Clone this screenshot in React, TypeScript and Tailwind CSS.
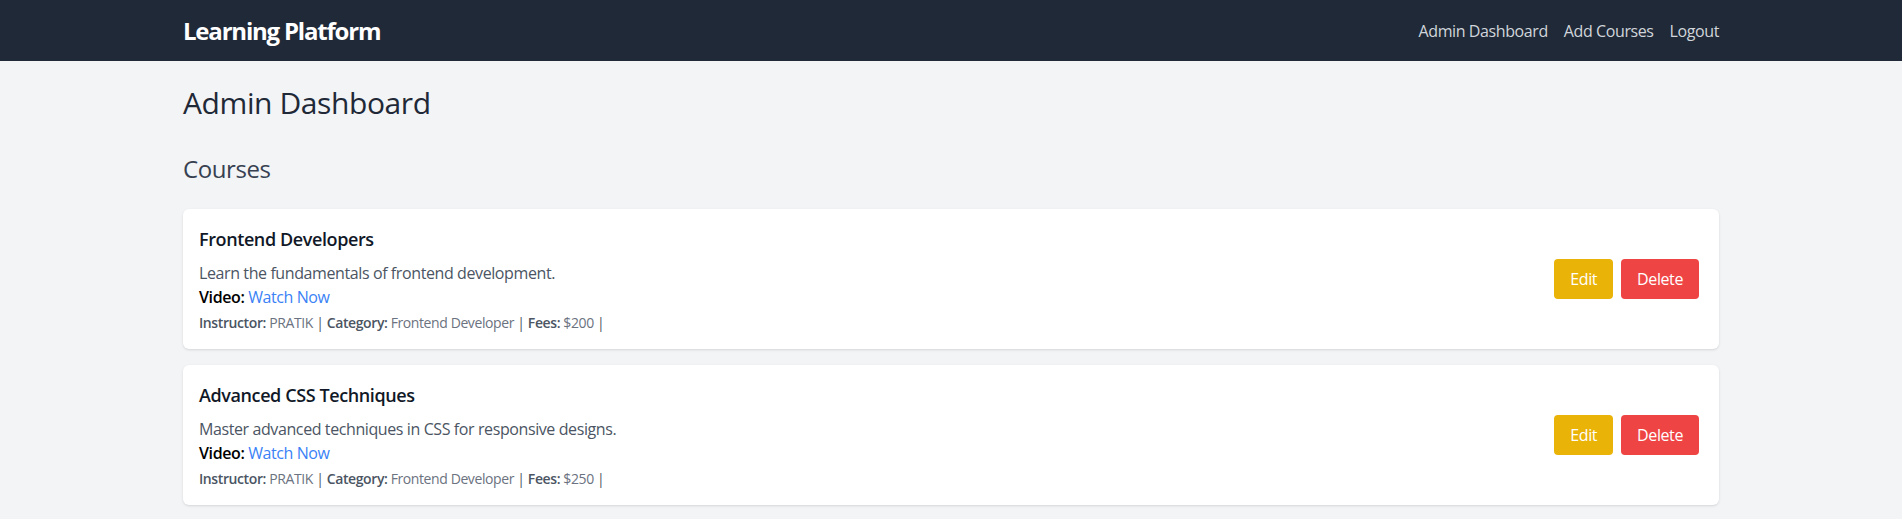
import React from "react";

type Course = {
  id: number;
  title: string;
  description: string;
  instructor: string;
  category: string;
  fees: number;
};

const courses: Course[] = [
  {
    id: 1,
    title: "Frontend Developers",
    description: "Learn the fundamentals of frontend development.",
    instructor: "PRATIK",
    category: "Frontend Developer",
    fees: 200,
  },
  {
    id: 2,
    title: "Advanced CSS Techniques",
    description: "Master advanced techniques in CSS for responsive designs.",
    instructor: "PRATIK",
    category: "Frontend Developer",
    fees: 250,
  },
];

const Navbar = () => {
  return (
    <nav className="h-[61px] bg-[#1f2937]">
      <div className="container mx-auto flex h-full items-center justify-between">
        <a href="#" className="text-2xl font-bold tracking-tighter text-white">
          Learning Platform
        </a>
        <div className="flex space-x-4 text-[#d1d5db]">
          <a href="#" className="hover:text-white">
            Admin Dashboard
          </a>
          <a href="#" className="hover:text-white">
            Add Courses
          </a>
          <a href="#" className="hover:text-white">
            Logout
          </a>
        </div>
      </div>
    </nav>
  );
};

const CourseCard = ({ course }: { course: Course }) => {
  return (
    <div className="flex items-center justify-between rounded-md bg-white py-4 pl-4 pr-5 shadow">
      <div>
        {/* Course info */}
        <h3 className="mb-2 text-lg font-semibold text-[#111827]">{course.title}</h3>
        <p className="text-[#4b5563]">{course.description}</p>
        <p className="text-black">
          <span className="font-semibold">Video:</span>{" "}
          <a href="#" className="text-[#3b82f6] hover:underline">
            Watch Now
          </a>
        </p>
        <p className="mt-1 text-sm text-[#6b7280]">
          <span className="font-semibold text-[#4b5563]">Instructor:</span> {course.instructor}{" "}
          <span className="text-[#4b5563]">|</span>{" "}
          <span className="font-semibold text-[#4b5563]">Category:</span> {course.category}{" "}
          <span className="text-[#4b5563]">|</span>{" "}
          <span className="font-semibold text-[#4b5563]">Fees:</span> ${course.fees}{" "}
          <span className="text-[#4b5563]">|</span>
        </p>
      </div>

      {/* Actions */}
      <div className="flex space-x-2">
        <button className="rounded bg-[#eab308] px-4 py-2 text-white hover:bg-[#ca8a04]">
          Edit
        </button>
        <button className="rounded bg-[#ef4444] px-4 py-2 text-white hover:bg-[#dc2626]">
          Delete
        </button>
      </div>
    </div>
  );
};

const App = () => {
  return (
    <div className="min-h-screen bg-[#f3f4f6] font-['Open_Sans',sans-serif] tracking-tight">
      <Navbar />
      <main className="container mx-auto pt-6">
        <h1 className="mb-8 text-3xl font-medium text-[#1f2937]">Admin Dashboard</h1>
        <h2 className="mb-6 text-2xl font-medium text-[#374151]">Courses</h2>
        <div className="space-y-4">
          {courses.map(course => (
            <CourseCard key={course.id} course={course} />
          ))}
        </div>
      </main>
    </div>
  );
};

export default App;
